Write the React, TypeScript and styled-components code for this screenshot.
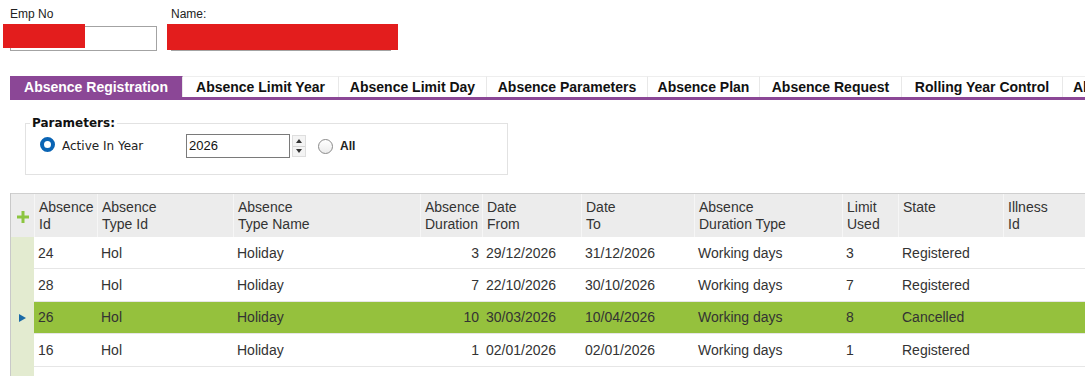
import React from 'react';
import styled, { createGlobalStyle } from 'styled-components';

const PURPLE = '#8b4796';
const SELECTED = '#95c13d';
const INDICATOR = '#e3ebd0';

const GlobalStyle = createGlobalStyle`
  html, body {
    margin: 0;
    padding: 0;
    background: #fff;
  }
  body {
    font-family: "Liberation Sans", Arial, sans-serif;
    color: #333;
    overflow: hidden;
  }
`;

const Page = styled.div`
  width: 1085px;
  height: 376px;
  overflow: hidden;
  padding-left: 10px;
  box-sizing: border-box;
`;

const TopFields = styled.div`
  display: flex;
  gap: 14px;
  padding-top: 8px;
`;

const Field = styled.div`
  display: flex;
  flex-direction: column;
`;

const FieldLabel = styled.div`
  font-family: "Liberation Sans", Arial, sans-serif;
  font-size: 12px;
  line-height: 13px;
  color: #222;
`;

const InputWrap = styled.div`
  position: relative;
  margin-top: 5px;
`;

const TextBox = styled.div<{ $width: number }>`
  width: ${({ $width }) => $width}px;
  height: 25px;
  box-sizing: border-box;
  border: 1px solid #a3a3a3;
  background: #fff;
`;

const Redact = styled.div<{ $left: number; $top: number; $w: number; $h: number }>`
  position: absolute;
  left: ${({ $left }) => $left}px;
  top: ${({ $top }) => $top}px;
  width: ${({ $w }) => $w}px;
  height: ${({ $h }) => $h}px;
  background: #e31d1d;
`;

const TabStrip = styled.div`
  display: flex;
  margin-top: 25px;
  border-bottom: 3px solid ${PURPLE};
  white-space: nowrap;
  overflow: hidden;
`;

const Tab = styled.div<{ $active?: boolean; $width?: number }>`
  flex-shrink: 0;
  box-sizing: border-box;
  width: ${({ $width }) => ($width ? `${$width}px` : 'auto')};
  height: 21px;
  line-height: 21px;
  padding: 0 ${({ $width }) => ($width ? '0' : '10px')};
  text-align: center;
  font-size: 14px;
  font-weight: bold;
  color: ${({ $active }) => ($active ? '#fff' : '#111')};
  background: ${({ $active }) => ($active ? PURPLE : '#fff')};
  border-right: 1px solid #e8e8e8;
  border-top: 1px solid ${({ $active }) => ($active ? PURPLE : '#eeeeee')};
`;

const Group = styled.fieldset`
  width: 483px;
  box-sizing: border-box;
  margin: 16px 0 0 15px;
  padding: 4px 14px 16px;
  border: 1px solid #e2e2e2;
`;

const Legend = styled.legend`
  margin-left: -10px;
  padding: 0 2px;
  font-family: "DejaVu Sans", Tahoma, sans-serif;
  font-size: 12px;
  font-weight: bold;
  line-height: 14px;
  color: #111;
`;

const ParamRow = styled.div`
  display: flex;
  align-items: center;
  height: 24px;
`;

const RadioLabel = styled.label<{ $width?: number }>`
  display: flex;
  align-items: center;
  gap: 7px;
  width: ${({ $width }) => ($width ? `${$width}px` : 'auto')};
  font-family: "DejaVu Sans", Tahoma, sans-serif;
  font-size: 12px;
  color: #222;
`;

const RadioDot = styled.span<{ $checked?: boolean }>`
  width: 15px;
  height: 15px;
  box-sizing: border-box;
  border-radius: 50%;
  border: ${({ $checked }) => ($checked ? '4px solid #0a64b4' : '1px solid #8a8a8a')};
  background: ${({ $checked }) => ($checked ? '#fff' : 'linear-gradient(#fff, #ececec)')};
  margin-top: ${({ $checked }) => ($checked ? '-3px' : '0')};
`;

const BoldText = styled.span`
  font-family: "Liberation Sans", Arial, sans-serif;
  font-weight: bold;
  font-size: 12px;
  color: #222;
`;

const YearBox = styled.div`
  width: 104px;
  height: 24px;
  box-sizing: border-box;
  border: 1px solid #7a7a7a;
  padding: 0 2px;
  line-height: 22px;
  font-family: "Liberation Sans", Arial, sans-serif;
  font-size: 13px;
  color: #111;
`;

const Spinner = styled.div`
  display: flex;
  flex-direction: column;
  width: 14px;
  height: 22px;
  margin-left: 2px;
  margin-right: 12px;
  border: 1px solid #dedede;
  box-sizing: border-box;
  background: #f4f4f4;
`;

const SpinHalf = styled.div`
  flex: 1;
  display: flex;
  align-items: center;
  justify-content: center;
  & + & {
    border-top: 1px solid #d6d6d6;
  }
`;

const COLS = '23px 63px 136px 187px 62px 99px 113px 148px 56px 105px 140px';

const Grid = styled.div`
  margin-top: 18px;
  border-left: 1px solid #c9c9c9;
  width: 1200px;
`;

const HeaderRow = styled.div`
  display: grid;
  grid-template-columns: ${COLS};
  height: 43px;
  background: #ececec;
  border-top: 1px solid #cfcfcf;
`;

const HeaderCell = styled.div`
  padding: 5px 4px 0;
  font-size: 14px;
  line-height: 16.5px;
  color: #333;
  border-left: 1px solid #f6f6f6;
  white-space: nowrap;
`;

const HeaderCorner = styled.div`
  display: flex;
  align-items: center;
  justify-content: center;
  padding-top: 2px;
`;

const DataRow = styled.div<{ $selected?: boolean }>`
  display: grid;
  grid-template-columns: ${COLS};
  height: 32.4px;
  background: ${({ $selected }) => ($selected ? SELECTED : '#fff')};
`;

const Indicator = styled.div`
  display: flex;
  align-items: center;
  justify-content: center;
  background: ${INDICATOR};
`;

const Cell = styled.div<{ $right?: boolean }>`
  display: flex;
  align-items: center;
  justify-content: ${({ $right }) => ($right ? 'flex-end' : 'flex-start')};
  padding: 0 ${({ $right }) => ($right ? '3px' : '4px')};
  font-size: 14px;
  color: #333;
  border-bottom: 1px solid #e6e6e6;
  white-space: nowrap;
`;

const FillerRow = styled.div`
  display: grid;
  grid-template-columns: ${COLS};
  height: 30px;
`;

const headers = [
  ['Absence', 'Id'],
  ['Absence', 'Type Id'],
  ['Absence', 'Type Name'],
  ['Absence', 'Duration'],
  ['Date', 'From'],
  ['Date', 'To'],
  ['Absence', 'Duration Type'],
  ['Limit', 'Used'],
  ['State', ''],
  ['Illness', 'Id'],
];

const rows = [
  { id: '24', dur: '3', from: '29/12/2026', to: '31/12/2026', used: '3', state: 'Registered' },
  { id: '28', dur: '7', from: '22/10/2026', to: '30/10/2026', used: '7', state: 'Registered' },
  { id: '26', dur: '10', from: '30/03/2026', to: '10/04/2026', used: '8', state: 'Cancelled', selected: true },
  { id: '16', dur: '1', from: '02/01/2026', to: '02/01/2026', used: '1', state: 'Registered' },
];

const tabs: { label: string; width?: number }[] = [
  { label: 'Absence Registration', width: 173 },
  { label: 'Absence Limit Year', width: 156 },
  { label: 'Absence Limit Day', width: 148 },
  { label: 'Absence Parameters', width: 161 },
  { label: 'Absence Plan', width: 112 },
  { label: 'Absence Request', width: 142 },
  { label: 'Rolling Year Control', width: 161 },
  { label: 'Absence Transactions' },
];

function PlusIcon() {
  return (
    <svg width="12" height="12" viewBox="0 0 12 12">
      <rect x="4.5" y="0" width="3" height="12" fill="#8cc540" />
      <rect x="0" y="4.5" width="12" height="3" fill="#8cc540" />
    </svg>
  );
}

function RowArrow() {
  return (
    <svg width="7" height="8" viewBox="0 0 7 8">
      <polygon points="0,0 7,4 0,8" fill="#1a6aa6" />
    </svg>
  );
}

function SpinArrow({ up }: { up?: boolean }) {
  return (
    <svg width="6" height="4" viewBox="0 0 6 4">
      <polygon points={up ? '0,4 3,0 6,4' : '0,0 3,4 6,0'} fill="#333" />
    </svg>
  );
}

export default function App() {
  return (
    <Page>
      <GlobalStyle />
      <TopFields>
        <Field>
          <FieldLabel>Emp No</FieldLabel>
          <InputWrap>
            <TextBox $width={147} />
            <Redact $left={-7} $top={-2} $w={82} $h={24} />
          </InputWrap>
        </Field>
        <Field>
          <FieldLabel>Name:</FieldLabel>
          <InputWrap>
            <TextBox $width={220} />
            <Redact $left={-4} $top={-2} $w={231} $h={26} />
          </InputWrap>
        </Field>
      </TopFields>

      <TabStrip>
        {tabs.map((t, i) => (
          <Tab key={t.label} $active={i === 0} $width={t.width}>
            {t.label}
          </Tab>
        ))}
      </TabStrip>

      <Group>
        <Legend>Parameters:</Legend>
        <ParamRow>
          <RadioLabel $width={146}>
            <RadioDot $checked />
            Active In Year
          </RadioLabel>
          <YearBox>2026</YearBox>
          <Spinner>
            <SpinHalf>
              <SpinArrow up />
            </SpinHalf>
            <SpinHalf>
              <SpinArrow />
            </SpinHalf>
          </Spinner>
          <RadioLabel>
            <RadioDot />
            <BoldText>All</BoldText>
          </RadioLabel>
        </ParamRow>
      </Group>

      <Grid>
        <HeaderRow>
          <HeaderCorner>
            <PlusIcon />
          </HeaderCorner>
          {headers.map(([a, b], i) => (
            <HeaderCell key={i}>
              {a}
              <br />
              {b}
            </HeaderCell>
          ))}
        </HeaderRow>
        {rows.map((r) => (
          <DataRow key={r.id} $selected={r.selected}>
            <Indicator>{r.selected && <RowArrow />}</Indicator>
            <Cell>{r.id}</Cell>
            <Cell>Hol</Cell>
            <Cell>Holiday</Cell>
            <Cell $right>{r.dur}</Cell>
            <Cell>{r.from}</Cell>
            <Cell>{r.to}</Cell>
            <Cell>Working days</Cell>
            <Cell>{r.used}</Cell>
            <Cell>{r.state}</Cell>
            <Cell />
          </DataRow>
        ))}
        <FillerRow>
          <Indicator />
        </FillerRow>
      </Grid>
    </Page>
  );
}
